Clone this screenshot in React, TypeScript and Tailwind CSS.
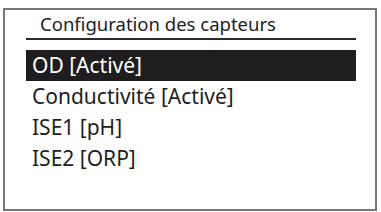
export default function App() {
  const items = ['OD [Activé]', 'Conductivité [Activé]', 'ISE1 [pH]', 'ISE2 [ORP]'];
  return (
    <div className="w-[381px] h-[212px] bg-white pt-[8px] pl-[3px]" style={{ fontFamily: '"Noto Sans", sans-serif' }}>
      <div className="w-[374px] h-[203px] border-2 border-[#777777] pl-[21px] pr-[19px]">
        <div className="h-[30px] border-b-2 border-[#2a2a2a] pl-[14px] text-[18.5px] leading-[28px] text-[#222222]">
          Configuration des capteurs
        </div>
        <div className="mt-[10px] flex flex-col">
          {items.map((it, i) => (
            <div
              key={it}
              className={
                i === 0
                  ? 'h-[31px] bg-[#1f1d1e] text-white pl-[6px] text-[21px] leading-[31px]'
                  : 'h-[31px] text-[#1e1e1e] pl-[6px] text-[21px] leading-[31px]'
              }
            >
              {it}
            </div>
          ))}
        </div>
      </div>
    </div>
  );
}
